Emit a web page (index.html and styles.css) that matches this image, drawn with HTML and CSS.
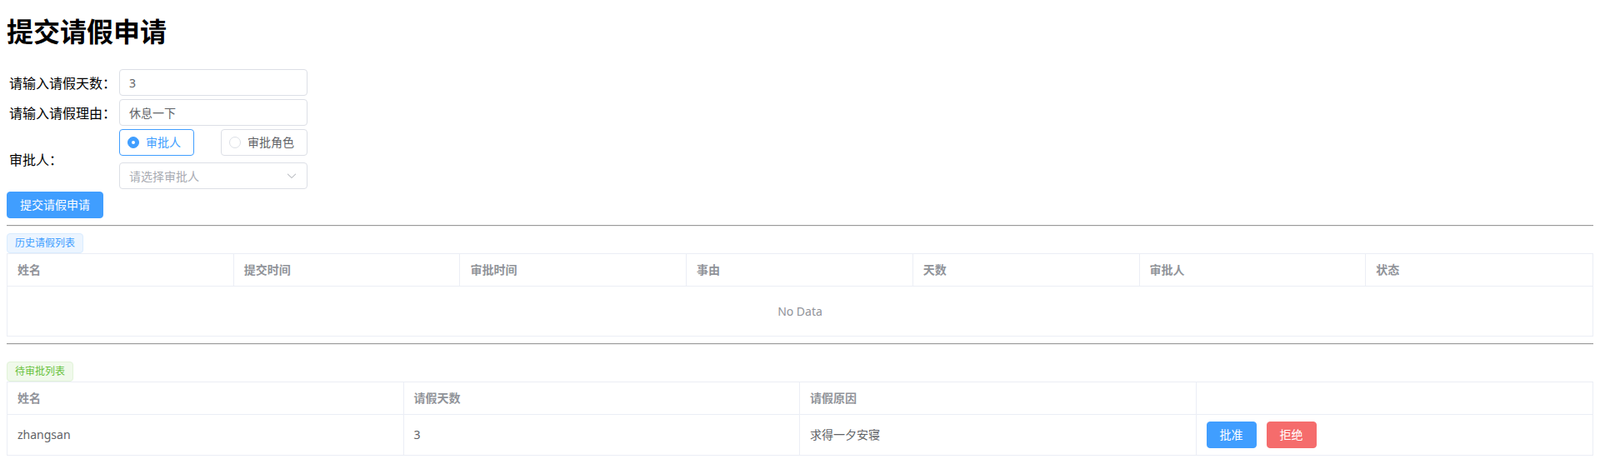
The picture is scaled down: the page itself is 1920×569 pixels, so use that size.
FILE: index.html
```html
<!DOCTYPE html>
<html lang="zh-CN">
<head>
<meta charset="utf-8">
<title>提交请假申请</title>
<link rel="stylesheet" href="styles.css">
</head>
<body>
<h1 class="page-title">提交请假申请</h1>

<table class="apply-form">
  <tr>
    <td class="f-label">请输入请假天数：</td>
    <td class="f-field"><input class="text-input" type="text" value="3"></td>
  </tr>
  <tr>
    <td class="f-label">请输入请假理由：</td>
    <td class="f-field"><input class="text-input" type="text" value="休息一下"></td>
  </tr>
  <tr>
    <td class="f-label">审批人：</td>
    <td class="f-field">
      <div class="radio-group">
        <label class="radio is-checked"><span class="radio-inner"></span><span class="radio-label">审批人</span></label>
        <label class="radio"><span class="radio-inner"></span><span class="radio-label">审批角色</span></label>
      </div>
      <div class="select">
        <span class="select-placeholder">请选择审批人</span>
        <svg class="select-arrow" viewBox="0 0 1024 1024"><path d="M831.872 340.864 512 652.672 192.128 340.864a30.592 30.592 0 0 0-42.752 0 29.12 29.12 0 0 0 0 41.6L489.664 714.24a32 32 0 0 0 44.672 0l340.288-331.712a29.12 29.12 0 0 0 0-41.728 30.592 30.592 0 0 0-42.752 0z"/></svg>
      </div>
    </td>
  </tr>
</table>
<div class="btn-row"><button class="btn btn-primary" type="button">提交请假申请</button></div>

<hr class="divider">

<section class="list-section">
  <div class="tag-row"><span class="tag tag-primary">历史请假列表</span></div>
  <div class="table-wrap">
    <table class="data-table">
      <thead>
        <tr><th>姓名</th><th>提交时间</th><th>审批时间</th><th>事由</th><th>天数</th><th>审批人</th><th>状态</th></tr>
      </thead>
    </table>
    <div class="table-empty">No Data</div>
  </div>
</section>

<hr class="divider">

<section class="list-section pending">
  <div class="tag-row"><span class="tag tag-success">待审批列表</span></div>
  <div class="table-wrap">
    <table class="data-table">
      <thead>
        <tr><th>姓名</th><th>请假天数</th><th>请假原因</th><th></th></tr>
      </thead>
      <tbody>
        <tr>
          <td>zhangsan</td>
          <td>3</td>
          <td>求得一夕安寝</td>
          <td><div class="actions"><button class="btn btn-primary" type="button">批准</button><button class="btn btn-danger" type="button">拒绝</button></div></td>
        </tr>
      </tbody>
    </table>
  </div>
</section>
</body>
</html>
```

FILE: styles.css
```css
* {
  box-sizing: border-box;
}

body {
  margin: 0;
  padding: 8px;
  background: #ffffff;
  color: #000000;
  font-family: "Noto Sans", "Noto Sans CJK SC", sans-serif;
}

.page-title {
  margin: 12px 0 28px;
  font-family: "Noto Sans CJK SC", sans-serif;
  font-size: 32px;
  line-height: 32px;
  font-weight: 700;
}

/* form */
.apply-form {
  border-collapse: separate;
  border-spacing: 2px;
  font-size: 16px;
}

.apply-form td {
  padding: 1px;
  vertical-align: middle;
}

.f-label {
  white-space: nowrap;
  line-height: 20px;
  font-family: "Noto Sans CJK SC", sans-serif;
}

.text-input {
  display: block;
  width: 226px;
  height: 32px;
  margin: 0;
  padding: 0 11px;
  border: 1px solid #dcdfe6;
  border-radius: 4px;
  background: #ffffff;
  color: #606266;
  font-family: "Noto Sans", "Noto Sans CJK SC", sans-serif;
  font-size: 14px;
  line-height: 30px;
  outline: none;
}

.radio-group {
  display: flex;
  justify-content: space-between;
  width: 226px;
}

.radio {
  display: inline-flex;
  align-items: center;
  height: 32px;
  padding: 0 15px 0 9px;
  border: 1px solid #dcdfe6;
  border-radius: 4px;
  color: #606266;
  font-size: 14px;
  font-weight: 400;
  white-space: nowrap;
}

.radio.is-checked {
  border-color: #409eff;
  color: #409eff;
}

.radio-inner {
  position: relative;
  width: 14px;
  height: 14px;
  border: 1px solid #dcdfe6;
  border-radius: 50%;
  background: #ffffff;
}

.radio.is-checked .radio-inner {
  border-color: #409eff;
  background: #409eff;
}

.radio.is-checked .radio-inner::after {
  content: "";
  position: absolute;
  left: 50%;
  top: 50%;
  width: 4px;
  height: 4px;
  border-radius: 50%;
  background: #ffffff;
  transform: translate(-50%, -50%);
}

.radio-label {
  padding-left: 8px;
  line-height: 1;
}

.select {
  display: flex;
  align-items: center;
  justify-content: space-between;
  width: 226px;
  height: 32px;
  margin-top: 8px;
  padding: 0 11px;
  border: 1px solid #dcdfe6;
  border-radius: 4px;
  color: #a8abb2;
  font-size: 14px;
}

.select-arrow {
  width: 14px;
  height: 14px;
  fill: #a8abb2;
}

/* buttons */
.btn-row {
  display: flex;
}

.btn {
  display: inline-flex;
  align-items: center;
  justify-content: center;
  height: 32px;
  margin: 0;
  padding: 0 15px;
  border: 1px solid transparent;
  border-radius: 4px;
  color: #ffffff;
  font-family: "Noto Sans", "Noto Sans CJK SC", sans-serif;
  font-size: 14px;
  font-weight: 400;
  line-height: 1;
  cursor: pointer;
}

.btn-primary {
  background: #409eff;
  border-color: #409eff;
}

.btn-danger {
  background: #f56c6c;
  border-color: #f56c6c;
}

/* divider */
.divider {
  height: 0;
  margin: 8px 0;
  border: 0;
  border-top: 1px solid #9a9a9a;
  border-bottom: 1px solid #eeeeee;
}

/* lists */
.list-section.pending {
  margin-top: 20px;
}

.tag-row {
  display: flex;
}

.tag {
  display: inline-flex;
  align-items: center;
  height: 24px;
  padding: 0 9px;
  border: 1px solid;
  border-radius: 4px;
  font-size: 12px;
  line-height: 1;
  white-space: nowrap;
}

.tag-primary {
  background: #ecf5ff;
  border-color: #d9ecff;
  color: #409eff;
}

.tag-success {
  background: #f0f9eb;
  border-color: #e1f3d8;
  color: #67c23a;
}

.table-wrap {
  border: 1px solid #ebeef5;
  border-bottom: 0;
}

.data-table {
  width: 100%;
  table-layout: fixed;
  border-collapse: separate;
  border-spacing: 0;
  color: #606266;
  font-size: 14px;
}

.data-table th,
.data-table td {
  padding: 8px 12px;
  border-right: 1px solid #ebeef5;
  border-bottom: 1px solid #ebeef5;
  text-align: left;
  line-height: 22px;
  vertical-align: middle;
}

.data-table th:last-child,
.data-table td:last-child {
  border-right: 0;
}

.data-table th {
  color: #909399;
  font-weight: 700;
}

.table-empty {
  height: 60px;
  border-bottom: 1px solid #ebeef5;
  color: #909399;
  font-size: 14px;
  line-height: 59px;
  text-align: center;
}

.actions {
  display: flex;
  gap: 12px;
}
```
